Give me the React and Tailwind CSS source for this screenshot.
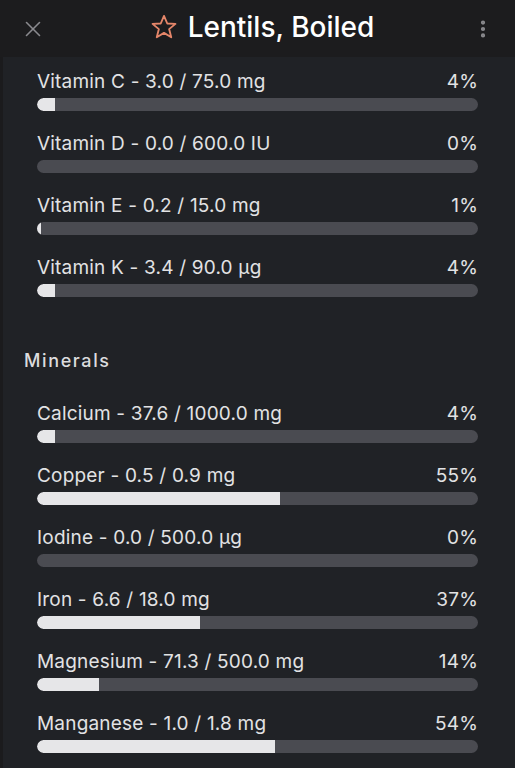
import { X, EllipsisVertical } from "lucide-react";

const vitamins = [
  { name: "Vitamin C", amount: "3.0", target: "75.0", unit: "mg", pct: 4 },
  { name: "Vitamin D", amount: "0.0", target: "600.0", unit: "IU", pct: 0 },
  { name: "Vitamin E", amount: "0.2", target: "15.0", unit: "mg", pct: 1 },
  { name: "Vitamin K", amount: "3.4", target: "90.0", unit: "µg", pct: 4 },
];

const minerals = [
  { name: "Calcium", amount: "37.6", target: "1000.0", unit: "mg", pct: 4 },
  { name: "Copper", amount: "0.5", target: "0.9", unit: "mg", pct: 55 },
  { name: "Iodine", amount: "0.0", target: "500.0", unit: "µg", pct: 0 },
  { name: "Iron", amount: "6.6", target: "18.0", unit: "mg", pct: 37 },
  { name: "Magnesium", amount: "71.3", target: "500.0", unit: "mg", pct: 14 },
  { name: "Manganese", amount: "1.0", target: "1.8", unit: "mg", pct: 54 },
];

function NutrientRow({ n }) {
  return (
    <div className="h-[62px]">
      <div className="flex items-center justify-between text-[19px] leading-[24px] tracking-[0.01em] text-[#e2e2e4]">
        <span>
          {n.name} - {n.amount} / {n.target} {n.unit}
        </span>
        <span>{n.pct}%</span>
      </div>
      <div className="mt-[4px] h-[13px] w-full overflow-hidden rounded-full bg-[#4a4b51]">
        {n.pct > 0 && (
          <div
            className="h-full rounded-l-full bg-[#e6e6e8]"
            style={{ width: `${Math.max(n.pct, 1)}%` }}
          />
        )}
      </div>
    </div>
  );
}

export default function App() {
  return (
    <div
      className="h-[768px] w-[515px] overflow-hidden bg-[#1b1b1d]"
      style={{ fontFamily: "Inter, 'Noto Sans', sans-serif" }}
    >
      <header className="flex h-[57px] items-center justify-between bg-[#1c1c1e] pl-[20px] pr-[21px]">
        <X className="h-[26px] w-[26px] text-[#8a8a8e]" strokeWidth={1.5} />
        <div className="flex items-center gap-[10px] pb-[4px] pl-[6px]">
          <svg width="28" height="28" viewBox="0 0 24 24" fill="none" stroke="#e5866a" strokeWidth="1.6" strokeLinejoin="round">
            <polygon points="12,2.5 14.8,9 21.8,9.3 16.4,13.8 18.2,20.8 12,17 5.8,20.8 7.6,13.8 2.2,9.3 9.2,9" />
          </svg>
          <span className="text-[28px] font-medium text-white">Lentils, Boiled</span>
        </div>
        <EllipsisVertical className="h-[22px] w-[22px] text-[#8a8a8e]" strokeWidth={2.6} />
      </header>
      <main className="ml-[3px] h-full bg-[#202226] pt-[13px]">
        <div className="pl-[34px] pr-[37px]">
          {vitamins.map((n) => (
            <NutrientRow key={n.name} n={n} />
          ))}
        </div>
        <h2 className="mt-[29px] mb-[28px] px-[21px] text-[18px] font-medium tracking-[0.09em] text-[#dcdcde]">
          Minerals
        </h2>
        <div className="pl-[34px] pr-[37px]">
          {minerals.map((n) => (
            <NutrientRow key={n.name} n={n} />
          ))}
        </div>
      </main>
    </div>
  );
}
